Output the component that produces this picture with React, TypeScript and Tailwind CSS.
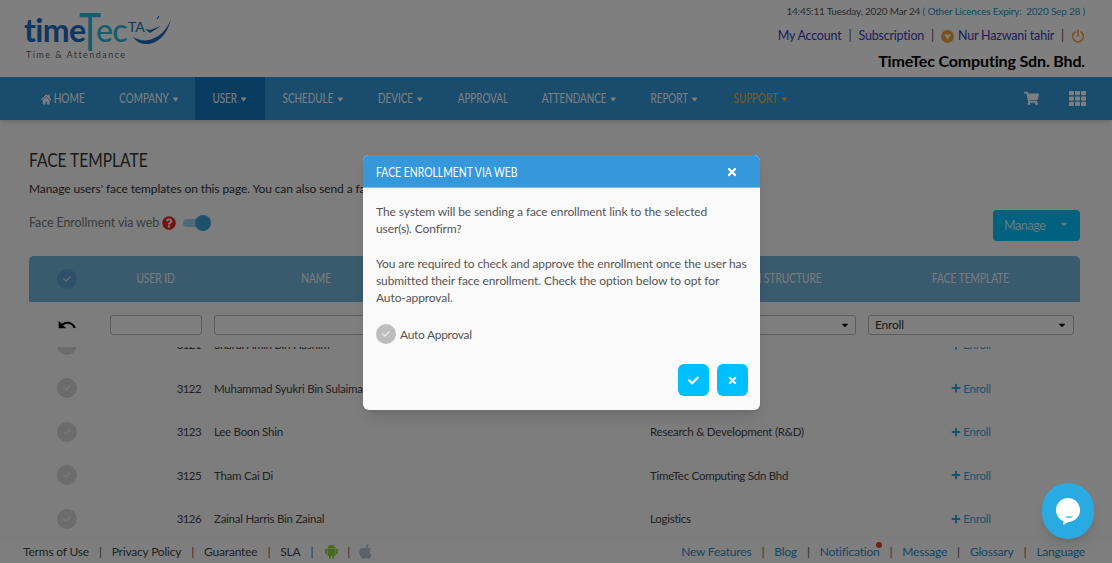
import {
  FaApple,
  FaCaretDown,
  FaCheck,
  FaHome,
  FaPlus,
  FaQuestionCircle,
  FaShoppingCart,
  FaTh,
  FaTimes,
} from 'react-icons/fa';
import { AiFillAndroid } from 'react-icons/ai';
import { MdUndo } from 'react-icons/md';

const navItems = [
  { label: 'COMPANY', w: 'w-[93px]', caret: true },
  { label: 'USER', w: 'w-[70px] bg-[#1479c4]', caret: true },
  { label: 'SCHEDULE', w: 'w-[96px]', caret: true },
  { label: 'DEVICE', w: 'w-[79px]', caret: true },
  { label: 'APPROVAL', w: 'w-[85px]', caret: false },
  { label: 'ATTENDANCE', w: 'w-[108px]', caret: true },
  { label: 'REPORT', w: 'w-[82px]', caret: true },
  { label: 'SUPPORT', w: 'w-[92px] text-[#f5b942]', caret: true },
];

const rows = [
  { id: '3121', name: 'Sharul Amin Bin Hashim', org: '' },
  { id: '3122', name: 'Muhammad Syukri Bin Sulaiman', org: '' },
  { id: '3123', name: 'Lee Boon Shin', org: 'Research & Development (R&D)' },
  { id: '3125', name: 'Tham Cai Di', org: 'TimeTec Computing Sdn Bhd' },
  { id: '3126', name: 'Zainal Harris Bin Zainal', org: 'Logistics' },
];

const cols = 'grid grid-cols-[75px_104px_216px_220px_218px_218px]';

function Sep({ wide = false }: { wide?: boolean }) {
  return <span className={`${wide ? 'px-[10px]' : 'px-[7px]'} text-[#555]`}>|</span>;
}

function HeadCell({ label }: { label: string }) {
  return (
    <div className="flex justify-center whitespace-nowrap">
      <span className="inline-block scale-x-[0.78]">{label}</span>
    </div>
  );
}

function Logo() {
  return (
    <div className="relative h-[60px] w-[150px] shrink-0">
      <span className="absolute left-[24px] top-[17px] text-[32px] leading-[26px] tracking-[-0.6px] font-bold text-[#1c6cc0]">
        time
      </span>
      <span className="absolute left-[79px] top-[12px] origin-left scale-x-[0.7] text-[53px] leading-[38px] text-[#2fb8d8]">
        T
      </span>
      <span className="absolute left-[96px] top-[17px] text-[32px] leading-[26px] tracking-[-0.6px] font-medium text-[#2fb8d8]">
        ec
      </span>
      <span className="absolute left-[128px] top-[19px] text-[14px] leading-[16px] text-[#1c6cc0]">TA</span>
      <svg className="absolute left-[130px] top-[13px]" width="44" height="38" viewBox="0 0 44 38" fill="none">
        <path d="M2 22 C 8 36, 34 36, 41 6 C 36 20, 20 34, 3 24 Z" fill="#1c6cc0" />
        <path d="M15 16 L20 20 L31 13 L20 17 Z" fill="#1c6cc0" />
        <path d="M27 6 L29 3" stroke="#1c6cc0" strokeWidth="1.2" />
      </svg>
      <div className="absolute left-[26px] top-[50px] text-[9px] leading-[10px] tracking-[1.45px] text-[#666]">
        Time &amp; Attendance
      </div>
    </div>
  );
}

function RoundCheck({ tone }: { tone: string }) {
  return (
    <span className={`w-5 h-5 ${tone} rounded-full flex items-center justify-center text-white/60 shrink-0`}>
      <FaCheck className="text-[8px]" />
    </span>
  );
}

export default function App() {
  return (
    <div className="relative h-[563px] overflow-hidden bg-[#fbfbfb] flex flex-col font-['Lato',sans-serif] text-[#333]">
      <header className="h-[77px] bg-white flex justify-between shrink-0">
        <Logo />
        <div className="pr-[27px] flex flex-col items-end">
          <div className="mt-[5px] h-[13px] text-[10px] leading-[13px] tracking-[-0.2px] text-[#555]">
            14:45:11 Tuesday, 2020 Mar 24{' '}
            <span className="text-[#1f8fc4]">( Other Licences Expiry:&nbsp; 2020 Sep 28 )</span>
          </div>
          <div className="mt-[9px] h-[18px] flex items-center text-[12.5px] tracking-[-0.2px] text-[#3b3bb8]">
            <span>My Account</span>
            <Sep />
            <span>Subscription</span>
            <Sep />
            <svg className="mr-[4px]" width="13" height="13" viewBox="0 0 13 13">
              <circle cx="6.5" cy="6.5" r="6.5" fill="#f2a33a" />
              <path d="M3 4.5 H10 L6.5 9.5 Z" fill="#fff" />
            </svg>
            <span>Nur Hazwani tahir</span>
            <Sep />
            <svg width="14" height="14" viewBox="0 0 14 14" fill="none" stroke="#f2a33a" strokeWidth="1.6" strokeLinecap="round">
              <path d="M4 3 A5.4 5.4 0 1 0 10 3" />
              <path d="M7 1 V7" />
            </svg>
          </div>
          <div className="mt-[6px] text-[16px] leading-[20px] tracking-[-0.15px] font-bold text-black">
            TimeTec Computing Sdn. Bhd.
          </div>
        </div>
      </header>

      <nav className="h-[43px] bg-[#3498db] flex shrink-0 pl-[23px] text-white text-[13px] shadow-md">
        <div className="w-[79px] flex items-center justify-center">
          <div className="flex items-center gap-[3px] pt-[1px] scale-x-[0.78]">
            <FaHome className="text-[13px]" />
            <span>HOME</span>
          </div>
        </div>
        {navItems.map(item => (
          <div key={item.label} className={`${item.w} flex items-center justify-center`}>
            <div className="flex items-center gap-[3px] pt-[1px] pl-[2px] scale-x-[0.76] whitespace-nowrap">
              <span>{item.label}</span>
              {item.caret && <FaCaretDown className="text-[12px]" />}
            </div>
          </div>
        ))}
        <div className="ml-auto pr-[26px] flex items-center gap-[30px]">
          <FaShoppingCart className="text-[15px]" />
          <FaTh className="text-[17px]" />
        </div>
      </nav>

      <main className="flex-1 min-h-0 pl-[29px] pr-[32px] flex flex-col">
        <h1 className="mt-[28px] origin-left scale-x-[0.82] text-[19px] leading-[24px] text-[#333] whitespace-nowrap">
          FACE TEMPLATE
        </h1>
        <p className="mt-[9px] text-[12px] leading-[16px] tracking-[-0.1px] whitespace-nowrap">
          Manage users' face templates on this page. You can also send a face enrollment link to users.
        </p>
        <div className="relative h-[50px] mt-[1px]">
          <div className="absolute left-0 top-[16px] flex items-center text-[12.5px] tracking-[-0.1px] text-[#777]">
            <span>Face Enrollment via web</span>
            <FaQuestionCircle className="ml-[3px] text-[#e02a1f] text-[14px]" />
            <span className="relative ml-[7px] w-[21px] h-[8px] rounded-full bg-[#9fd3ee]">
              <span className="absolute -right-[7px] -top-[4px] w-[16px] h-[16px] rounded-full bg-[#3ea2dd]" />
            </span>
          </div>
          <div className="absolute right-0 top-[12px] w-[87px] h-[31px] rounded-[4px] bg-[#00c4ff] flex items-center justify-between px-[11px] text-[12.5px] tracking-[-0.4px] text-white/80">
            <span className="mt-[1px]">Manage</span>
            <FaCaretDown className="text-[10px] -mt-[3px]" />
          </div>
        </div>

        <div className={`h-[46px] mt-[8px] bg-[#74b4dc] rounded-t-[5px] ${cols} items-center text-[13px] text-white/90 shrink-0`}>
          <div className="flex justify-center">
            <RoundCheck tone="bg-[#5ea0d0]" />
          </div>
          <HeadCell label="USER ID" />
          <HeadCell label="NAME" />
          <div />
          <HeadCell label="ORGANIZATION STRUCTURE" />
          <HeadCell label="FACE TEMPLATE" />
        </div>

        <div className={`h-[45px] ${cols} items-start shrink-0 pt-[13px]`}>
          <div className="flex justify-center">
            <MdUndo className="text-[20px] text-black" />
          </div>
          <div className="px-[6px]">
            <div className="h-[20px] rounded-[3px] border border-[#bbb] bg-white" />
          </div>
          <div className="px-[6px]">
            <div className="h-[20px] rounded-[3px] border border-[#bbb] bg-white" />
          </div>
          <div />
          <div className="px-[6px]">
            <div className="h-[20px] rounded-[3px] border border-[#bbb] bg-white flex justify-end items-center pr-[5px]">
              <FaCaretDown className="text-[10px] text-black" />
            </div>
          </div>
          <div className="px-[6px]">
            <div className="h-[20px] rounded-[3px] border border-[#bbb] bg-white flex justify-between items-center px-[6px] text-[12px] tracking-[-0.2px]">
              <span>Enroll</span>
              <FaCaretDown className="text-[10px] text-black" />
            </div>
          </div>
        </div>

        <div className="flex-1 min-h-0 overflow-hidden">
          <div className="-mt-[24px]">
            {rows.map(row => (
              <div key={row.id} className={`h-[43.5px] ${cols} items-center text-[11.5px] tracking-[-0.25px] text-[#444]`}>
                <div className="flex justify-center">
                  <RoundCheck tone="bg-[#d8d8d8]" />
                </div>
                <div className="text-right pr-[7px] tracking-[-0.6px]">{row.id}</div>
                <div className="pl-[6px] whitespace-nowrap">{row.name}</div>
                <div />
                <div className="pl-[6px] whitespace-nowrap">{row.org}</div>
                <div className="flex items-center justify-center gap-[2px] text-[#2ba8e0]">
                  <FaPlus className="text-[10px]" />
                  <span>Enroll</span>
                </div>
              </div>
            ))}
          </div>
        </div>
      </main>

      <footer className="h-[23px] bg-[#fdfdfd] flex justify-between items-center shrink-0 pl-[23px] pr-[27px] text-[12px] tracking-[-0.2px]">
        <div className="flex items-center text-[#444]">
          <span>Terms of Use</span>
          <Sep wide />
          <span>Privacy Policy</span>
          <Sep wide />
          <span>Guarantee</span>
          <Sep wide />
          <span>SLA</span>
          <Sep wide />
          <AiFillAndroid className="text-[17px] text-[#8ed63f]" />
          <Sep />
          <FaApple className="text-[17px] text-[#b8c4d0]" />
        </div>
        <div className="flex items-center text-[#2a8ac9]">
          <span>New Features</span>
          <Sep wide />
          <span>Blog</span>
          <Sep wide />
          <span className="relative">
            Notification
            <span className="absolute -right-[2px] -top-[1px] w-[6px] h-[6px] rounded-full bg-[#e0402a]" />
          </span>
          <Sep wide />
          <span>Message</span>
          <Sep wide />
          <span>Glossary</span>
          <Sep wide />
          <span>Language</span>
        </div>
      </footer>

      {/* dim layer + dialog */}
      <div className="absolute inset-0 bg-black/50" />
      <div className="absolute left-[363px] top-[155px] w-[397px] h-[255px] rounded-[6px] bg-[#fafafa] overflow-hidden shadow-lg text-[12px] leading-[17px] tracking-[-0.1px] text-[#555] flex flex-col">
        <div className="h-[33px] bg-[#3498db] border-b border-[#7fbde8] flex items-center justify-between pl-[13px] pr-[22px] text-white text-[13px] tracking-normal shrink-0">
          <span className="pt-[3px] origin-left scale-x-[0.8] whitespace-nowrap">FACE ENROLLMENT VIA WEB</span>
          <FaTimes className="text-[12px] mt-[2px]" />
        </div>
        <div className="px-[13px] pt-[15px] flex-1 flex flex-col whitespace-nowrap">
          <p>
            The system will be sending a face enrollment link to the selected
            <br />
            user(s). Confirm?
          </p>
          <p className="mt-[18px]">
            You are required to check and approve the enrollment once the user has
            <br />
            submitted their face enrollment. Check the option below to opt for
            <br />
            Auto-approval.
          </p>
          <div className="mt-[18px] flex items-center gap-[4px]">
            <RoundCheck tone="bg-[#bdbdbd]" />
            <span className="tracking-[-0.3px]">Auto Approval</span>
          </div>
          <div className="mt-auto mb-[14px] -mr-[1px] flex justify-end gap-[8px]">
            <button className="w-[31px] h-[32px] rounded-[6px] bg-[#00bfff] text-white flex items-center justify-center">
              <FaCheck className="text-[11px]" />
            </button>
            <button className="w-[31px] h-[32px] rounded-[6px] bg-[#00bfff] text-white flex items-center justify-center">
              <FaTimes className="text-[11px]" />
            </button>
          </div>
        </div>
      </div>

      <div className="absolute left-[1042px] top-[483px] w-[52px] h-[56px] rounded-full bg-[#29abe2] shadow-lg flex items-center justify-center">
        <svg width="26" height="30" viewBox="0 0 28 32">
          <path d="M14 2 C21 2 27 8 27 15 C27 22 21 28 14 28 L9 31 L9 27 C4 25 1 20 1 15 C1 8 7 2 14 2 Z" fill="#fff" />
          <path d="M10 22 Q15 25 20 22 Z" fill="#29abe2" />
        </svg>
      </div>
    </div>
  );
}
